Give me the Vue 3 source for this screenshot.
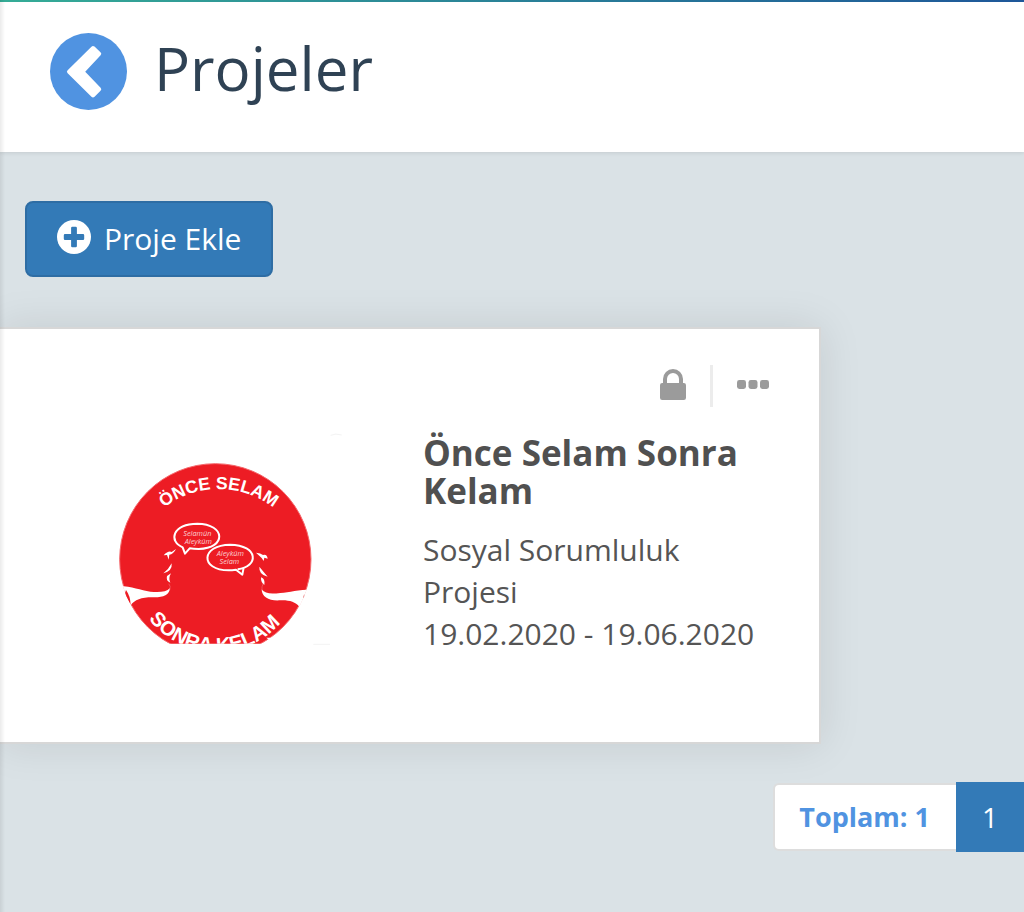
<script setup>
const project = {
  name: 'Önce Selam Sonra Kelam',
  type: 'Sosyal Sorumluluk Projesi',
  dates: '19.02.2020 - 19.06.2020'
}
const total = 1
</script>

<template>
  <div class="page">
    <header class="header">
      <a class="back" href="#" aria-label="Geri">
        <svg viewBox="0 0 77 77" aria-hidden="true">
          <circle cx="38.5" cy="38.5" r="38.5" fill="#5093e1" />
          <path d="M19.2 38.7 43 15.2 49 20.8 32.2 38.7 49 56.2 43 62.2Z" fill="#fff" stroke="#fff" stroke-width="4.4" stroke-linejoin="round" />
        </svg>
      </a>
      <h1 class="title">Projeler</h1>
    </header>

    <main class="content">
      <button class="add" type="button">
        <svg viewBox="0 0 34 34" aria-hidden="true">
          <circle cx="17" cy="17" r="17" fill="#fff" />
          <path d="M15.3 8H18.7V15.3H26V18.7H18.7V26H15.3V18.7H8V15.3H15.3Z" fill="#337ab7" stroke="#337ab7" stroke-width="2.4" stroke-linejoin="round" />
        </svg>
        <span>Proje Ekle</span>
      </button>

      <article class="card">
        <div class="actions">
          <button class="icon-button" type="button" aria-label="Kilit">
            <svg class="lock" viewBox="0 0 26 31" aria-hidden="true">
              <rect x="0" y="14" width="26" height="17" rx="2.2" fill="#9b9b9b" />
              <path d="M5 15V10A8 8 0 0 1 21 10V15" fill="none" stroke="#9b9b9b" stroke-width="4" />
            </svg>
          </button>
          <span class="divider"></span>
          <button class="icon-button" type="button" aria-label="Seçenekler">
            <svg class="dots" viewBox="0 0 32 9" aria-hidden="true">
              <rect x="0" width="9" height="9" rx="2.4" />
              <rect x="11.5" width="9" height="9" rx="2.4" />
              <rect x="23" width="9" height="9" rx="2.4" />
            </svg>
          </button>
        </div>

        <div class="body">
          <svg class="logo" viewBox="0 0 750 660" role="img" aria-label="Önce Selam Sonra Kelam">
            <defs>
              <clipPath id="frame"><rect width="750" height="641" /></clipPath>
              <clipPath id="disc"><circle cx="346" cy="388" r="289" /></clipPath>
              <path id="arc-top" d="M86 447A270 270 0 0 1 626 447" />
              <path id="arc-bottom" d="M93 410A256 256 0 0 0 605 410" />
            </defs>
            <g clip-path="url(#frame)">
              <circle cx="346" cy="388" r="287" fill="#ed1c24" stroke="#f4686c" stroke-width="3" />
              <path d="M499 623H530V641H520Z" fill="#fff" />
              <g class="ring-text">
                <text font-size="53"><textPath href="#arc-top" startOffset="50%" text-anchor="middle">ÖNCE SELAM</textPath></text>
                <text font-size="61"><textPath href="#arc-bottom" startOffset="49%" text-anchor="middle">SONRA KELAM</textPath></text>
              </g>
              <g clip-path="url(#disc)" fill="#fff">
                <path d="M50 468C92 466 120 481 151 485C178 488 199 486 210 474C209 494 190 502 164 502C126 501 105 508 92 526L50 540Z" />
                <path d="M78 480Q91 498 92 524L74 492Z" fill="#ed1c24" />
                <path d="M650 478C600 478 572 486 541 489C514 492 495 492 485 478C485 502 509 514 542 511C568 510 586 516 598 530L650 530Z" />
                <path d="M609 500 613 492 615 501 610 506Z" fill="#ed9a9c" />
              </g>
              <g fill="#fff">
                <path d="M191 376Q205 361 215 366L228 357Q220 373 208 374L206 389 201 375Z" />
                <path d="M215 400Q218 423 190 430Q206 418 215 400Z" />
                <path d="M201 438 213 430Q204 446 211 458Q197 453 201 438Z" />
                <path d="M468 368Q482 369 489 375Q501 371 503 386L493 383 491 393 485 384Z" />
                <path d="M478 410Q487 421 503 440Q476 434 478 410Z" />
                <path d="M483 442Q496 446 493 465Q482 457 483 442Z" />
              </g>
              <g fill="none" stroke="#f26a6e" stroke-width="2" stroke-linecap="round">
                <path d="M207 462Q213 468 210 478M489 462Q484 470 486 480" />
              </g>
              <g fill="#ed1c24" stroke="#fff" stroke-width="6" stroke-linejoin="round">
                <path d="M248 352C205 334 216 282 292 281C378 282 380 356 296 357Q280 357 269 355L255 371Z" />
                <path d="M413 418C476 411 478 346 390 344C303 345 298 420 386 421Q396 421 408 419L427 434 431 413" />
              </g>
              <g class="bubble-text">
                <text x="292" y="317">Selamün</text>
                <text x="295" y="341">Aleyküm</text>
                <text x="391" y="377">Aleyküm</text>
                <text x="388" y="402">Selam</text>
              </g>
            </g>
            <path d="M692 16Q707 9 725 15M640 643H690" fill="none" stroke="#f3f3f3" stroke-width="3" />
          </svg>

          <div class="info">
            <h2>{{ project.name }}</h2>
            <p>{{ project.type }}</p>
            <p>{{ project.dates }}</p>
          </div>
        </div>
      </article>

      <nav class="pagination" aria-label="Sayfalar">
        <span class="total">Toplam: {{ total }}</span>
        <a class="current" href="#" aria-current="page">1</a>
      </nav>
    </main>
  </div>
</template>

<style>
body {
  margin: 0;
  background: #dae2e6;
}
</style>

<style scoped>
.page {
  position: relative;
  min-height: 100vh;
  overflow: hidden;
  background: #dae2e6;
  color: #555;
  font-family: "Open Sans", "Noto Sans", sans-serif;
  font-size: 30px;
  line-height: 42px;
}
.page::after {
  content: "";
  position: absolute;
  inset: 0 auto 0 0;
  width: 5px;
  background: linear-gradient(90deg, rgba(0, 0, 0, 0.08), transparent);
  pointer-events: none;
}
.header {
  position: relative;
  display: flex;
  align-items: flex-start;
  gap: 27px;
  box-sizing: border-box;
  height: 152px;
  padding: 33px 50px 0;
  background: #fff;
  box-shadow: 0 1px 4px rgba(0, 0, 0, 0.1);
}
.header::before {
  content: "";
  position: absolute;
  inset: 0 0 auto;
  height: 2px;
  background: linear-gradient(90deg, #35ac96, #1e5799);
}
.back, .back svg {
  display: block;
  width: 77px;
  height: 77px;
}
.title {
  margin: 0;
  color: #2f4254;
  font-size: 60px;
  line-height: 70px;
  font-weight: 400;
}
.content {
  padding-top: 49px;
}
.add {
  display: flex;
  align-items: center;
  gap: 13px;
  margin-left: 25px;
  padding: 15px 30px;
  border: 2px solid #2e6da4;
  border-radius: 8px;
  background: #337ab7;
  color: #fff;
  font: inherit;
}
.add svg {
  width: 34px;
  height: 34px;
  margin-bottom: 4px;
}
.card {
  box-sizing: border-box;
  width: calc(80% + 2px);
  margin-top: 50px;
  padding: 36px 50px 87px 100px;
  border: 2px solid #d7d7d7;
  border-left: 0;
  background: #fff;
  box-shadow: 0 0 40px rgba(0, 0, 0, 0.1);
}
.actions {
  display: flex;
  justify-content: flex-end;
  align-items: center;
  gap: 24px;
  height: 42px;
}
.icon-button {
  display: block;
  padding: 0 0 4px;
  border: 0;
  background: none;
}
.icon-button svg {
  display: block;
}
.lock {
  width: 26px;
  height: 31px;
}
.dots {
  width: 32px;
  height: 9px;
  fill: #9b9b9b;
}
.divider {
  width: 3px;
  height: 42px;
  background: #ececec;
}
.body {
  display: flex;
  align-items: flex-start;
  gap: 73px;
  margin-top: 23px;
}
.logo {
  flex: none;
  width: 250px;
  height: 220px;
}
.ring-text {
  fill: #fff;
  font-family: "Liberation Sans", Arial, sans-serif;
  font-weight: 700;
}
.bubble-text {
  fill: #fbd0d2;
  font-family: "Open Sans", sans-serif;
  font-size: 22px;
  font-style: italic;
  text-anchor: middle;
}
.info {
  flex: 1;
  padding-top: 4px;
}
.info h2 {
  margin: 0 0 19px;
  color: #505050;
  font-size: 35px;
  line-height: 38px;
  font-weight: 700;
}
.info p {
  margin: 0;
}
.pagination {
  display: flex;
  justify-content: flex-end;
  align-items: center;
  margin-top: 38px;
  font-size: 28px;
}
.total {
  padding: 11px 26px 11px 24px;
  border: 2px solid #ddd;
  border-right: 0;
  border-radius: 6px 0 0 6px;
  background: #fff;
  color: #5093e1;
  font-size: 27px;
  font-weight: 700;
}
.current {
  padding: 14px 26px;
  background: #337ab7;
  color: #fff;
  text-decoration: none;
}
</style>
